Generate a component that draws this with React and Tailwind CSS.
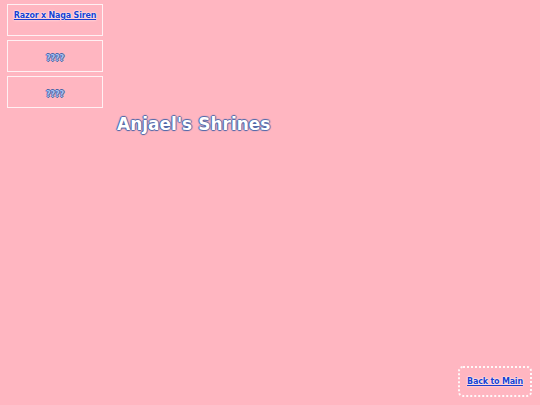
import React from 'react'

const links = [
    { label: 'Razor x Naga Siren', color: 'text-[#1a3fd0] underline [text-shadow:0_0_2px_#fff,0_0_1px_#fff,0_0_1px_#fff]' },
    { label: '????', color: 'text-[#a9c2f2] [text-shadow:1px_0_0_#4a66a8,-1px_0_0_#4a66a8,0_1px_0_#4a66a8,0_-1px_0_#4a66a8]' },
    { label: '????', color: 'text-[#a9c2f2] [text-shadow:1px_0_0_#4a66a8,-1px_0_0_#4a66a8,0_1px_0_#4a66a8,0_-1px_0_#4a66a8]' },
]

const App = () => {
    return (
        <div className="h-[405px] w-[540px] bg-[#ffb6c1] flex flex-col font-['DejaVu_Sans',Verdana,sans-serif] overflow-hidden">
            <div className="flex items-start">
                {/* Sidebar */}
                <div className="ml-[7px] mt-[4px] w-[96px] flex flex-col gap-[4px]">
                    {links.map((link, index) => (
                        <div
                            key={index}
                            className={`border border-white/80 h-[32px] flex justify-center ${index === 0 ? 'items-start pt-[5px]' : 'items-center pt-[6px]'}`}
                        >
                            <a
                                href="#"
                                className={`text-[8px] font-bold leading-[12px] tracking-[-0.2px] whitespace-nowrap ${link.color}`}
                            >
                                {link.label}
                            </a>
                        </div>
                    ))}
                </div>

                {/* Title */}
                <h1 className="ml-[14px] mt-[112px] text-[17px] font-bold leading-[24px] whitespace-nowrap text-white [text-shadow:1px_0_1px_#4a66a8,-1px_0_1px_#4a66a8,0_1px_1px_#4a66a8,0_-1px_1px_#4a66a8]">
                    Anjael's Shrines
                </h1>
            </div>

            <div className="flex-1" />

            {/* Back link */}
            <div className="flex justify-end pr-[8px] pb-[8px]">
                <div className="border-2 border-dotted border-white/90 rounded-[5px] w-[74px] h-[31px] flex items-center justify-center pt-[1px]">
                    <a href="#" className="text-[8px] font-bold tracking-[-0.2px] whitespace-nowrap text-[#1a3fd0] underline [text-shadow:0_0_2px_#fff,0_0_1px_#fff,0_0_1px_#fff]">
                        Back to Main
                    </a>
                </div>
            </div>
        </div>
    )
}

export default App
